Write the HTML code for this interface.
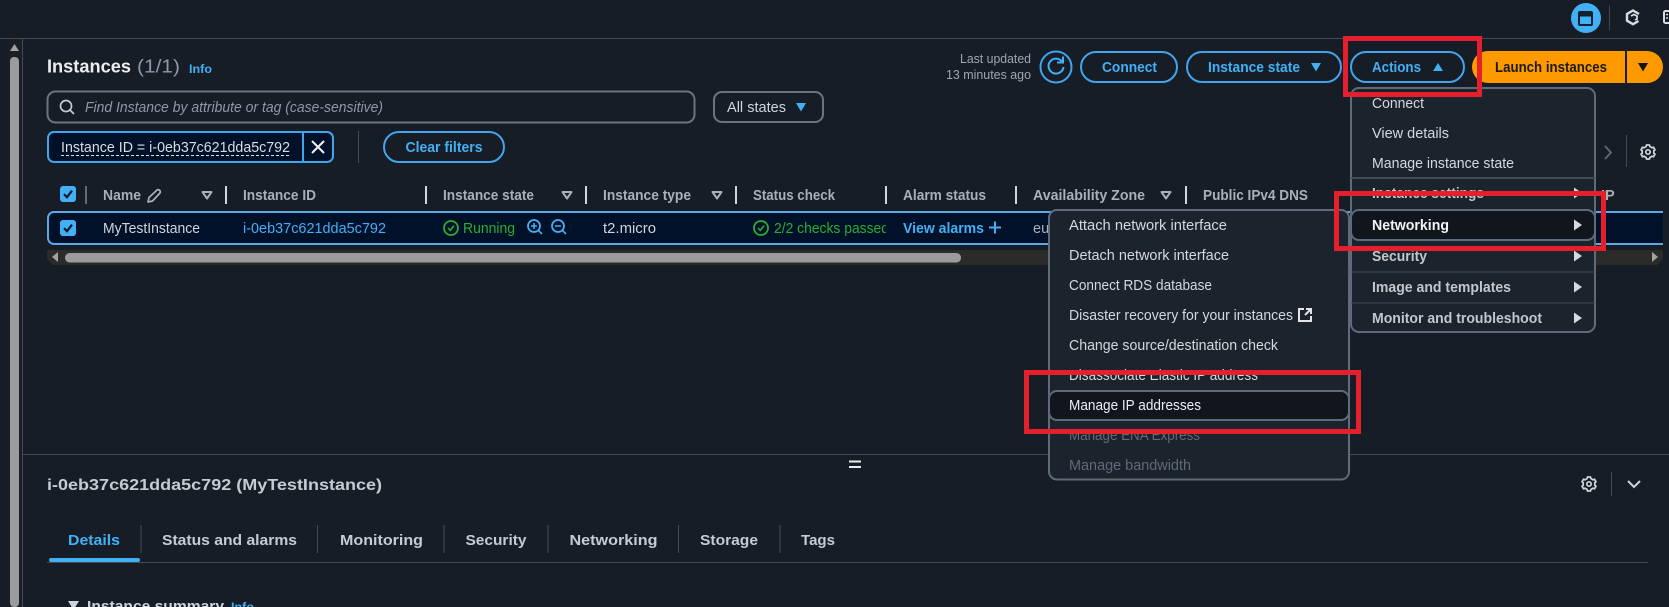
<!DOCTYPE html>
<html><head><meta charset="utf-8"><title>Instances</title>
<style>
html,body{margin:0;padding:0;background:#161d26;width:1669px;height:607px;overflow:hidden}
svg{display:block;position:absolute;left:0;top:0}
text{font-family:"Liberation Sans",sans-serif;font-size:14.5px;fill:#d1d5db;white-space:pre}
.b{font-weight:700}
.h{font-weight:700;fill:#a9b0b8}
.l{fill:#42b0f5}
.lb{fill:#42b0f5;font-weight:700}
.g{fill:#29ad32}
.m{fill:#d5d8dc}
.mb{fill:#c3c7cc;font-weight:700}
.d{fill:#5f6b7a}
.s{font-size:12.500px;fill:#a0a6ad}
.btn{fill:none;stroke:#42a5ec;stroke-width:2}
.ic{fill:none;stroke:#d1d5db;stroke-width:1.7;stroke-linejoin:round;stroke-linecap:round}
.red{fill:none;stroke:#e5202c;stroke-width:5}
</style></head><body>
<svg width="1669" height="607" viewBox="0 0 1669 607" xmlns="http://www.w3.org/2000/svg">
<defs>
<g id="gear"><path class="ic" d="M6.8 -0.0c0-.4 0-.8-.1-1.2l1.3-1-1.5-2.6-1.6.6c-.6-.5-1.3-.9-2-1.2L2.5 -7h-3l-.4 1.6c-.7.3-1.4.7-2 1.2l-1.6-.6L-6 -2.2l1.3 1c-.1.4-.1.8-.1 1.2s0 .8.1 1.2l-1.3 1 1.5 2.6 1.6-.6c.6.5 1.3.9 2 1.2L-.5 7h3l.4-1.6c.7-.3 1.4-.7 2-1.2l1.6.6L8 2.2l-1.3-1c.1-.4.1-.8.1-1.2z"/><circle class="ic" cx="1" cy="0" r="2.2"/></g>
<path id="tri" d="M-5 -4h10L0 4.500z"/>
<path id="filt" d="M-4.500 -3h9L0 3.500z" fill="none" stroke="#a9b0b8" stroke-width="2" stroke-linejoin="round"/>
<g id="chk"><rect x="0" y="0" width="16" height="16" rx="3" fill="#42b0f5"/><path d="M4 8.2l3 3 5-6.5" fill="none" stroke="#0f1b2a" stroke-width="2.2"/></g>
<path id="arr" d="M0 -5.500L8 0L0 5.500z" fill="#d5d8dc"/>
<g id="okc"><circle cx="0" cy="0" r="7" fill="none" stroke="#29ad32" stroke-width="1.800"/><path d="M-3 0l2.2 2.4L3 -2.400" fill="none" stroke="#29ad32" stroke-width="1.600"/></g>
</defs>

<rect width="1669" height="607" fill="#161d26"/>

<!-- top bar -->
<line x1="0" y1="38.500" x2="1669" y2="38.500" stroke="#424a55"/>
<circle cx="1586" cy="18" r="15" fill="#42b0f5"/>
<rect x="1579" y="12" width="13" height="13" rx="1" fill="none" stroke="#13202e" stroke-width="2"/>
<rect x="1579" y="12" width="13" height="4.500" fill="#13202e"/>
<line x1="1609.500" y1="5" x2="1609.500" y2="30" stroke="#3d444e"/>
<path d="M1638.500 21l-5.500 3.200-6-3.500v-6.700l6-3.500 6 3.500" fill="none" stroke="#d9dce0" stroke-width="2.400"/>
<path d="M1631 16l3-1.500 3 1.500v3l-2 1" fill="none" stroke="#d9dce0" stroke-width="1.800"/>
<rect x="1664" y="11" width="8" height="12" rx="1.500" fill="none" stroke="#d9dce0" stroke-width="2"/>
<path d="M1666 14.500h2M1666 18h2" stroke="#d9dce0" stroke-width="1.500"/>

<!-- left scrollbar -->
<rect x="7" y="39" width="15" height="568" fill="#1a1e25"/>
<line x1="22.500" y1="39" x2="22.500" y2="607" stroke="#424a55"/>
<path d="M10 51h9l-4.500 -7z" fill="#a3a3a3"/>
<rect x="10" y="57" width="9" height="550" rx="4" fill="#9b9b9b"/>

<!-- heading -->
<text x="47" y="72.500" class="b" style="font-size:18px;fill:#eceef0" textLength="84" lengthAdjust="spacingAndGlyphs">Instances</text>
<text x="137" y="72.500" style="font-size:18px;fill:#8d99a8" textLength="43" lengthAdjust="spacingAndGlyphs">(1/1)</text>
<text x="189" y="73" class="lb" style="font-size:12px" textLength="23" lengthAdjust="spacingAndGlyphs">Info</text>

<!-- right toolbar -->
<text x="1031" y="63" text-anchor="end" class="s" textLength="71" lengthAdjust="spacingAndGlyphs">Last updated</text>
<text x="1031" y="79" text-anchor="end" class="s" textLength="85" lengthAdjust="spacingAndGlyphs">13 minutes ago</text>
<circle cx="1056" cy="67" r="15.500" class="btn"/>
<path d="M1062 61.500a7.500 7.500 0 1 0 1.500 5.500" fill="none" stroke="#42b0f5" stroke-width="2"/>
<path d="M1057 62.500h6v-6" fill="none" stroke="#42b0f5" stroke-width="2"/>
<rect x="1081" y="52" width="96" height="30" rx="15" class="btn"/>
<text x="1102" y="72" class="lb" textLength="55" lengthAdjust="spacingAndGlyphs">Connect</text>
<rect x="1187" y="52" width="154" height="30" rx="15" class="btn"/>
<text x="1208" y="72" class="lb" textLength="92" lengthAdjust="spacingAndGlyphs">Instance state</text>
<use href="#tri" x="1316" y="67" fill="#42b0f5"/>
<rect x="1351" y="52" width="113" height="30" rx="15" class="btn"/>
<text x="1372" y="72" class="lb" textLength="49" lengthAdjust="spacingAndGlyphs">Actions</text>
<path d="M1433 71h10l-5-8z" fill="#42b0f5"/>
<path d="M1488 51h137v32h-137a16 16 0 0 1 0-32z" fill="#ff9900"/>
<path d="M1627 51h20a16 16 0 0 1 0 32h-20z" fill="#ff9900"/>
<text x="1495" y="72" class="b" style="fill:#1a1a1a" textLength="112" lengthAdjust="spacingAndGlyphs">Launch instances</text>
<use href="#tri" x="1643" y="67" fill="#0f141a"/>

<!-- search -->
<rect x="47.500" y="91.500" width="647" height="31" rx="8" fill="none" stroke="#6b7580" stroke-width="2"/>
<circle cx="66" cy="106" r="5.500" fill="none" stroke="#c6cbd0" stroke-width="1.700"/>
<line x1="70" y1="110" x2="74" y2="114" stroke="#c6cbd0" stroke-width="1.700"/>
<text x="85" y="112" style="fill:#8d99a8;font-style:italic" textLength="298" lengthAdjust="spacingAndGlyphs">Find Instance by attribute or tag (case-sensitive)</text>
<rect x="714" y="92" width="109" height="30" rx="8" fill="none" stroke="#6b7580" stroke-width="2"/>
<text x="727" y="112" textLength="59" lengthAdjust="spacingAndGlyphs">All states</text>
<use href="#tri" x="801" y="107" fill="#42b0f5"/>

<!-- filter -->
<rect x="48" y="132" width="285" height="30" rx="6" fill="#001129" stroke="#42a5ec" stroke-width="2"/>
<line x1="303" y1="132" x2="303" y2="162" stroke="#42a5ec" stroke-width="2"/>
<text x="61" y="152" style="fill:#d9dce0" textLength="229" lengthAdjust="spacingAndGlyphs">Instance ID = i-0eb37c621dda5c792</text>
<line x1="61" y1="155.500" x2="290" y2="155.500" stroke="#d9dce0" stroke-dasharray="3 2"/>
<path d="M312 141l12 12M324 141l-12 12" stroke="#f0f1f3" stroke-width="2"/>
<line x1="358.500" y1="131" x2="358.500" y2="163" stroke="#424a55"/>
<rect x="384" y="132" width="120" height="30" rx="15" class="btn"/>
<text x="405.500" y="152" class="lb" textLength="77" lengthAdjust="spacingAndGlyphs">Clear filters</text>

<!-- pagination -->
<path d="M1605 146l6 6.500-6 6.500" fill="none" stroke="#5f6b7a" stroke-width="1.800"/>
<line x1="1626.500" y1="135" x2="1626.500" y2="167" stroke="#424a55"/>
<use href="#gear" x="1647" y="152"/>

<!-- table header -->
<use href="#chk" x="60" y="186"/>
<line x1="86" y1="186" x2="86" y2="204" stroke="#5f6b7a" stroke-width="2"/>
<text x="103" y="200" class="h" textLength="38" lengthAdjust="spacingAndGlyphs">Name</text>
<path d="M148 202l1-4.500 8-7.500a2.200 2.200 0 0 1 3 3l-7.500 8z" fill="none" stroke="#a9b0b8" stroke-width="1.700" stroke-linejoin="round"/>
<use href="#filt" x="207" y="195"/>
<line x1="226" y1="186" x2="226" y2="204" stroke="#d1d5db" stroke-width="2"/>
<text x="243" y="200" class="h" textLength="73" lengthAdjust="spacingAndGlyphs">Instance ID</text>
<line x1="426" y1="186" x2="426" y2="204" stroke="#d1d5db" stroke-width="2"/>
<text x="443" y="200" class="h" textLength="91" lengthAdjust="spacingAndGlyphs">Instance state</text>
<use href="#filt" x="567" y="195"/>
<line x1="586" y1="186" x2="586" y2="204" stroke="#d1d5db" stroke-width="2"/>
<text x="603" y="200" class="h" textLength="88" lengthAdjust="spacingAndGlyphs">Instance type</text>
<use href="#filt" x="717" y="195"/>
<line x1="736" y1="186" x2="736" y2="204" stroke="#d1d5db" stroke-width="2"/>
<text x="753" y="200" class="h" textLength="82" lengthAdjust="spacingAndGlyphs">Status check</text>
<line x1="886" y1="186" x2="886" y2="204" stroke="#d1d5db" stroke-width="2"/>
<text x="903" y="200" class="h" textLength="83" lengthAdjust="spacingAndGlyphs">Alarm status</text>
<line x1="1016" y1="186" x2="1016" y2="204" stroke="#d1d5db" stroke-width="2"/>
<text x="1033" y="200" class="h" textLength="112" lengthAdjust="spacingAndGlyphs">Availability Zone</text>
<use href="#filt" x="1166" y="195"/>
<line x1="1186" y1="186" x2="1186" y2="204" stroke="#d1d5db" stroke-width="2"/>
<text x="1203" y="200" class="h" textLength="105" lengthAdjust="spacingAndGlyphs">Public IPv4 DNS</text>
<text x="1601" y="200" class="h">IP</text>

<!-- selected row -->
<rect x="48" y="212" width="1640" height="32" rx="6" fill="#001129" stroke="#5aa8e6" stroke-width="2"/>
<use href="#chk" x="60" y="220"/>
<text x="103" y="233" style="fill:#d1d5db" textLength="97" lengthAdjust="spacingAndGlyphs">MyTestInstance</text>
<text x="243" y="233" class="l" textLength="143" lengthAdjust="spacingAndGlyphs">i-0eb37c621dda5c792</text>
<use href="#okc" x="451" y="228"/>
<text x="463" y="233" class="g" textLength="52" lengthAdjust="spacingAndGlyphs">Running</text>
<circle cx="534" cy="226" r="6" fill="none" stroke="#42b0f5" stroke-width="1.800"/>
<path d="M538.500 230.500l3.500 3.500M531 226h6M534 223v6" stroke="#42b0f5" stroke-width="1.600" fill="none"/>
<circle cx="558" cy="226" r="6" fill="none" stroke="#42b0f5" stroke-width="1.800"/>
<path d="M562.500 230.500l3.500 3.500M555 226h6" stroke="#42b0f5" stroke-width="1.600" fill="none"/>
<text x="603" y="233" style="fill:#d1d5db" textLength="53" lengthAdjust="spacingAndGlyphs">t2.micro</text>
<use href="#okc" x="761" y="228"/>
<svg x="774" y="215" width="112" height="26"><text x="0" y="18" class="g" textLength="115" lengthAdjust="spacingAndGlyphs">2/2 checks passed</text></svg>
<text x="903" y="233" class="lb" textLength="81" lengthAdjust="spacingAndGlyphs">View alarms</text>
<path d="M989 227.500h12M995 221.500v12" stroke="#42b0f5" stroke-width="2"/>
<text x="1033" y="233" style="fill:#a9b0b8">eu</text>
<rect x="1663" y="205" width="6" height="45" fill="#161d26"/>

<!-- h-scrollbar -->
<path d="M47 250h1616v9l-6 6H53l-6-6z" fill="#2b2b2a"/>
<path d="M58 252l-6 5 6 5z" fill="#a3a3a3"/>
<rect x="65" y="253" width="896" height="9.500" rx="4.500" fill="#9b9b9b"/>
<path d="M1652 252l6 5-6 5z" fill="#a3a3a3"/>

<!-- lower panel -->
<line x1="22" y1="454.500" x2="1669" y2="454.500" stroke="#424a55"/>
<rect x="849" y="460.500" width="12" height="2" fill="#e8eaec"/>
<rect x="849" y="466" width="12" height="2" fill="#e8eaec"/>
<text x="47" y="490" class="b" style="font-size:16px;fill:#c6cbd0" textLength="335" lengthAdjust="spacingAndGlyphs">i-0eb37c621dda5c792 (MyTestInstance)</text>
<use href="#gear" x="1588" y="484"/>
<line x1="1611.500" y1="472" x2="1611.500" y2="496" stroke="#424a55"/>
<path d="M1628 481l6 6 6-6" fill="none" stroke="#d1d5db" stroke-width="2"/>

<text x="68" y="545" class="lb" textLength="52" lengthAdjust="spacingAndGlyphs">Details</text>
<line x1="141" y1="525" x2="141" y2="553" stroke="#424a55"/>
<text x="162" y="545" class="b" style="fill:#c6cbd0" textLength="135" lengthAdjust="spacingAndGlyphs">Status and alarms</text>
<line x1="317.500" y1="525" x2="317.500" y2="553" stroke="#424a55"/>
<text x="340" y="545" class="b" style="fill:#c6cbd0" textLength="83" lengthAdjust="spacingAndGlyphs">Monitoring</text>
<line x1="444" y1="525" x2="444" y2="553" stroke="#424a55"/>
<text x="465.500" y="545" class="b" style="fill:#c6cbd0" textLength="61" lengthAdjust="spacingAndGlyphs">Security</text>
<line x1="548" y1="525" x2="548" y2="553" stroke="#424a55"/>
<text x="569.500" y="545" class="b" style="fill:#c6cbd0" textLength="88" lengthAdjust="spacingAndGlyphs">Networking</text>
<line x1="678.500" y1="525" x2="678.500" y2="553" stroke="#424a55"/>
<text x="700" y="545" class="b" style="fill:#c6cbd0" textLength="58" lengthAdjust="spacingAndGlyphs">Storage</text>
<line x1="780" y1="525" x2="780" y2="553" stroke="#424a55"/>
<text x="801" y="545" class="b" style="fill:#c6cbd0" textLength="34" lengthAdjust="spacingAndGlyphs">Tags</text>
<line x1="47" y1="562.500" x2="1648" y2="562.500" stroke="#424a55"/>
<rect x="49" y="558" width="91" height="4" rx="2" fill="#42b0f5"/>
<path d="M68 601h11l-5.500 9z" fill="#d1d5db"/>
<text x="87" y="611" class="b" style="font-size:15px;fill:#d1d5db" textLength="137" lengthAdjust="spacingAndGlyphs">Instance summary</text>
<text x="231" y="611" class="lb" style="font-size:12px" textLength="23" lengthAdjust="spacingAndGlyphs">Info</text>

<!-- actions menu -->
<rect x="1351" y="88" width="244" height="244" rx="8" fill="#1b232d" stroke="#5f6b7a" stroke-width="2"/>
<text x="1372" y="108" class="m" textLength="52" lengthAdjust="spacingAndGlyphs">Connect</text>
<text x="1372" y="138" class="m" textLength="77" lengthAdjust="spacingAndGlyphs">View details</text>
<text x="1372" y="168" class="m" textLength="142" lengthAdjust="spacingAndGlyphs">Manage instance state</text>
<line x1="1351" y1="178" x2="1595" y2="178" stroke="#424a55" stroke-width="2"/>
<text x="1372" y="198" class="mb" textLength="112" lengthAdjust="spacingAndGlyphs">Instance settings</text>
<use href="#arr" x="1574" y="193"/>
<rect x="1351" y="210" width="244" height="30" rx="8" fill="#11161d" stroke="#5f6b7a" stroke-width="2"/>
<text x="1372" y="230" class="b" style="fill:#f2f3f4" textLength="77" lengthAdjust="spacingAndGlyphs">Networking</text>
<use href="#arr" x="1574" y="225" style="fill:#fff"/>
<text x="1372" y="261" class="mb" textLength="55" lengthAdjust="spacingAndGlyphs">Security</text>
<use href="#arr" x="1574" y="256"/>
<line x1="1351" y1="272" x2="1595" y2="272" stroke="#424a55"/>
<text x="1372" y="292" class="mb" textLength="139" lengthAdjust="spacingAndGlyphs">Image and templates</text>
<use href="#arr" x="1574" y="287"/>
<line x1="1351" y1="303" x2="1595" y2="303" stroke="#424a55"/>
<text x="1372" y="323" class="mb" textLength="170" lengthAdjust="spacingAndGlyphs">Monitor and troubleshoot</text>
<use href="#arr" x="1574" y="318"/>

<!-- submenu -->
<rect x="1049" y="210" width="300" height="269.500" rx="8" fill="#1b232d" stroke="#5f6b7a" stroke-width="2"/>
<text x="1069" y="230" class="m" textLength="158" lengthAdjust="spacingAndGlyphs">Attach network interface</text>
<text x="1069" y="260" class="m" textLength="160" lengthAdjust="spacingAndGlyphs">Detach network interface</text>
<text x="1069" y="290" class="m" textLength="143" lengthAdjust="spacingAndGlyphs">Connect RDS database</text>
<text x="1069" y="320" class="m" textLength="224" lengthAdjust="spacingAndGlyphs">Disaster recovery for your instances</text>
<path d="M1304 309h-5v12h12v-5M1306 309h5v5M1311 309l-6 6" fill="none" stroke="#e3e5e8" stroke-width="2"/>
<text x="1069" y="350" class="m" textLength="209" lengthAdjust="spacingAndGlyphs">Change source/destination check</text>
<text x="1069" y="380" class="m" textLength="189" lengthAdjust="spacingAndGlyphs">Disassociate Elastic IP address</text>
<rect x="1049" y="391" width="300" height="29" rx="8" fill="#11161d" stroke="#5f6b7a" stroke-width="2"/>
<text x="1069" y="410" style="fill:#eceef0" textLength="132" lengthAdjust="spacingAndGlyphs">Manage IP addresses</text>
<text x="1069" y="440" class="d" textLength="131" lengthAdjust="spacingAndGlyphs">Manage ENA Express</text>
<text x="1069" y="470" class="d" textLength="122" lengthAdjust="spacingAndGlyphs">Manage bandwidth</text>

<!-- red annotations -->
<rect x="1345.500" y="38.500" width="134" height="56" class="red"/>
<rect x="1336.500" y="193.500" width="267" height="55" class="red"/>
<rect x="1026.500" y="372.500" width="332" height="59" class="red"/>
</svg>
</body></html>
